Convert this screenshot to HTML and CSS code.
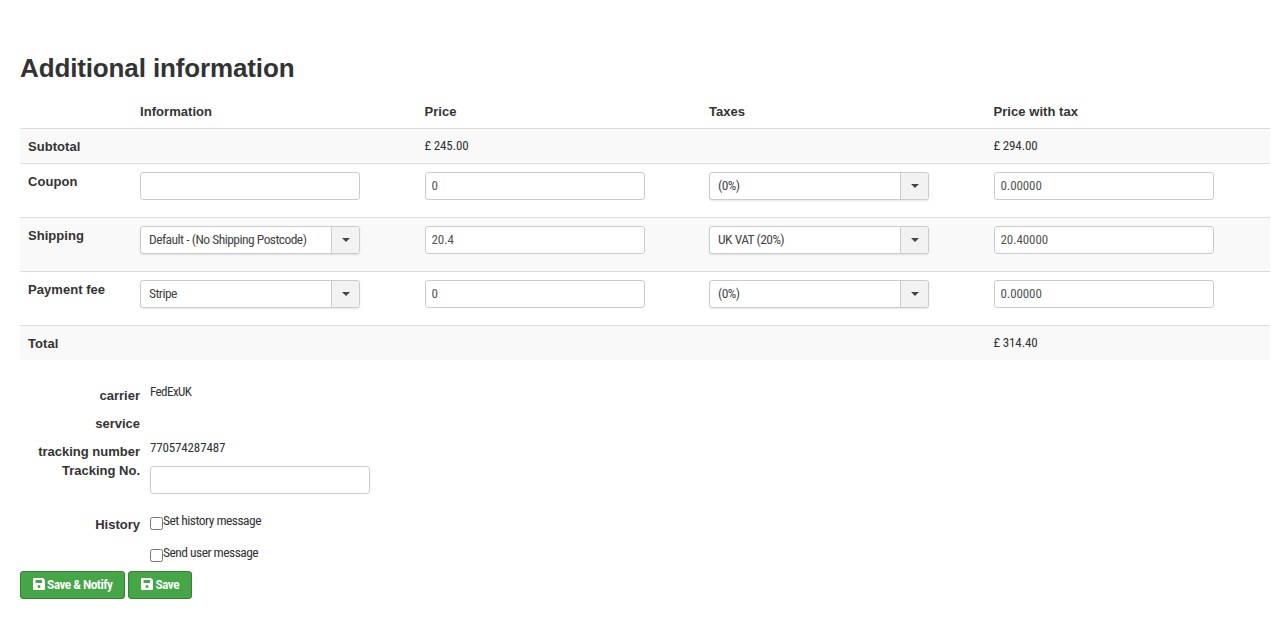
FILE: index.html
```html
<!DOCTYPE html>
<html lang="en">

    <head>
        <meta charset="UTF-8">
        <meta name="viewport" content="width=device-width, initial-scale=1.0">
        <title>Additional information</title>
        <link rel="stylesheet" href="styles.css">
    </head>

    <body>
        <main>
            <h2>Additional information</h2>
            <table class="order-table">
                <thead>
                    <tr>
                        <th class="row-title"></th>
                        <th>Information</th>
                        <th>Price</th>
                        <th>Taxes</th>
                        <th>Price with tax</th>
                    </tr>
                </thead>
                <tbody>
                    <tr class="summary">
                        <th>Subtotal</th>
                        <td></td>
                        <td><span class="amount">£ 245.00</span></td>
                        <td></td>
                        <td><span class="amount">£ 294.00</span></td>
                    </tr>
                    <tr>
                        <th>Coupon</th>
                        <td><input type="text" aria-label="Coupon code"></td>
                        <td><input type="text" value="0"></td>
                        <td>
                            <div class="select"><span>(0%)</span><i class="arrow"></i></div>
                        </td>
                        <td><input type="text" value="0.00000"></td>
                    </tr>
                    <tr>
                        <th>Shipping</th>
                        <td>
                            <div class="select"><span>Default - (No Shipping Postcode)</span><i class="arrow"></i></div>
                        </td>
                        <td><input type="text" value="20.4"></td>
                        <td>
                            <div class="select"><span>UK VAT (20%)</span><i class="arrow"></i></div>
                        </td>
                        <td><input type="text" value="20.40000"></td>
                    </tr>
                    <tr>
                        <th>Payment fee</th>
                        <td>
                            <div class="select"><span>Stripe</span><i class="arrow"></i></div>
                        </td>
                        <td><input type="text" value="0"></td>
                        <td>
                            <div class="select"><span>(0%)</span><i class="arrow"></i></div>
                        </td>
                        <td><input type="text" value="0.00000"></td>
                    </tr>
                    <tr class="summary">
                        <th>Total</th>
                        <td></td>
                        <td></td>
                        <td></td>
                        <td><span class="amount">£ 314.40</span></td>
                    </tr>
                </tbody>
            </table>

            <div class="fields">
                <div class="field">
                    <label>carrier</label>
                    <span class="value tight">FedExUK</span>
                </div>
                <div class="field">
                    <label>service</label>
                </div>
                <div class="field">
                    <label>tracking number</label>
                    <span class="value number">770574287487</span>
                </div>
                <div class="field tracking">
                    <label for="tracking">Tracking No.</label>
                    <input type="text" id="tracking">
                </div>
                <div class="field history">
                    <label>History</label>
                    <div class="checks">
                        <div class="check"><input type="checkbox" id="set-history"><label for="set-history">Set history message</label></div>
                        <div class="check"><input type="checkbox" id="send-user"><label for="send-user">Send user message</label></div>
                    </div>
                </div>
            </div>

            <div class="buttons">
                <button type="button">
                    <svg viewBox="0 0 12 12"><path fill-rule="evenodd" d="M1 0h9L12 2V11a1 1 0 0 1-1 1H1a1 1 0 0 1-1-1V1a1 1 0 0 1 1-1zM2.5 2v3h6.5v-3zM6 7a1.5 1.5 0 1 0 0 3 1.5 1.5 0 0 0 0-3z"/></svg>
                    <span>Save &amp; Notify</span>
                </button>
                <button type="button">
                    <svg viewBox="0 0 12 12"><path fill-rule="evenodd" d="M1 0h9L12 2V11a1 1 0 0 1-1 1H1a1 1 0 0 1-1-1V1a1 1 0 0 1 1-1zM2.5 2v3h6.5v-3zM6 7a1.5 1.5 0 1 0 0 3 1.5 1.5 0 0 0 0-3z"/></svg>
                    <span>Save</span>
                </button>
            </div>
        </main>
    </body>

</html>
```
FILE: styles.css
```css
:root {
    --text-color: #333;
    --border-color: #ccc;
    --line-color: #ddd;
    --stripe-color: #f9f9f9;
    --success-color: #46a546;
    --condensed: "Roboto Condensed", Roboto, sans-serif;
}

*,
*::before,
*::after {
    box-sizing: border-box;
}

body {
    margin: 0;
    background: #fff;
    color: var(--text-color);
    font-family: var(--condensed);
    font-size: 13px;
    font-stretch: 75%;
    line-height: 18px;
}

main {
    width: 1250px;
    margin-left: 20px;
    padding-top: 50px;
}

h2,
th,
.field > label {
    font-family: "Liberation Sans", Arial, sans-serif;
    font-weight: bold;
}

h2 {
    margin: 0;
    font-size: 26px;
    letter-spacing: -0.13px;
    line-height: 36px;
}

.order-table {
    width: 100%;
    margin-top: 8px;
    border-collapse: separate;
    border-spacing: 0;
    table-layout: fixed;
}

th,
td {
    padding: 8px;
    text-align: left;
    vertical-align: top;
}

th {
    font-size: 13px;
    letter-spacing: 0.05px;
}

thead th {
    height: 34px;
    padding: 9px 8px 7px;
}

.row-title {
    width: 112px;
}

tbody th,
tbody td {
    height: 54px;
    border-top: 1px solid var(--line-color);
}

tbody th {
    padding: 9px 8px 7px;
}

tbody tr:nth-child(odd) {
    background: var(--stripe-color);
}

.summary th,
.summary td {
    height: 35px;
}

input[type="text"],
.select {
    display: block;
    width: 220px;
    height: 28px;
    background: #fff;
    border: 1px solid var(--border-color);
    border-radius: 3px;
}

input[type="text"] {
    padding: 3px 6px 5px;
    color: #555;
    font-family: var(--condensed);
    font-size: 13px;
    font-stretch: 75%;
    letter-spacing: -0.1px;
}

.select {
    display: flex;
    justify-content: space-between;
    padding-left: 8px;
    color: #444;
    font-size: 13.5px;
    letter-spacing: -0.57px;
    word-spacing: 0.3px;
    line-height: 24px;
    white-space: nowrap;
    box-shadow: 0 1px 2px rgba(0, 0, 0, 0.1);
}

.arrow {
    display: flex;
    align-items: center;
    justify-content: center;
    width: 28px;
    background: #f2f2f2;
    border-left: 1px solid var(--border-color);
    border-radius: 0 2px 2px 0;
}

.arrow::before {
    content: "";
    border: 4px solid transparent;
    border-top-color: #444;
    border-bottom: 0;
}

.amount,
.number {
    letter-spacing: -0.15px;
}

.tight {
    letter-spacing: -0.55px;
}

.fields {
    margin-top: 22px;
}

.field {
    display: flex;
    gap: 10px;
    height: 28px;
}

.field > label {
    width: 120px;
    padding-top: 5px;
    text-align: right;
}

.value {
    padding-top: 1px;
}

.field.tracking {
    height: 50px;
}

.tracking > label {
    padding-top: 0;
    margin-top: -4px;
}

.field.history {
    height: 55px;
    margin-top: -5px;
    margin-bottom: 5px;
}

.check {
    display: flex;
    height: 32px;
}

.check label {
    font-size: 13.5px;
    letter-spacing: -0.53px;
}

.check input {
    width: 13px;
    height: 13px;
    margin: 6px 0 0;
}

.buttons {
    display: flex;
    gap: 3px;
}

button {
    display: flex;
    align-items: center;
    gap: 2px;
    min-width: 64px;
    height: 28px;
    padding: 0 12px 2px;
    background: var(--success-color);
    border: 1px solid #378137;
    border-radius: 3px;
    color: #fff;
    font-family: var(--condensed);
    font-size: 13.5px;
    font-stretch: 75%;
    font-weight: 600;
    letter-spacing: -0.55px;
}

button svg {
    width: 12px;
    height: 12px;
    fill: #fff;
}
```
